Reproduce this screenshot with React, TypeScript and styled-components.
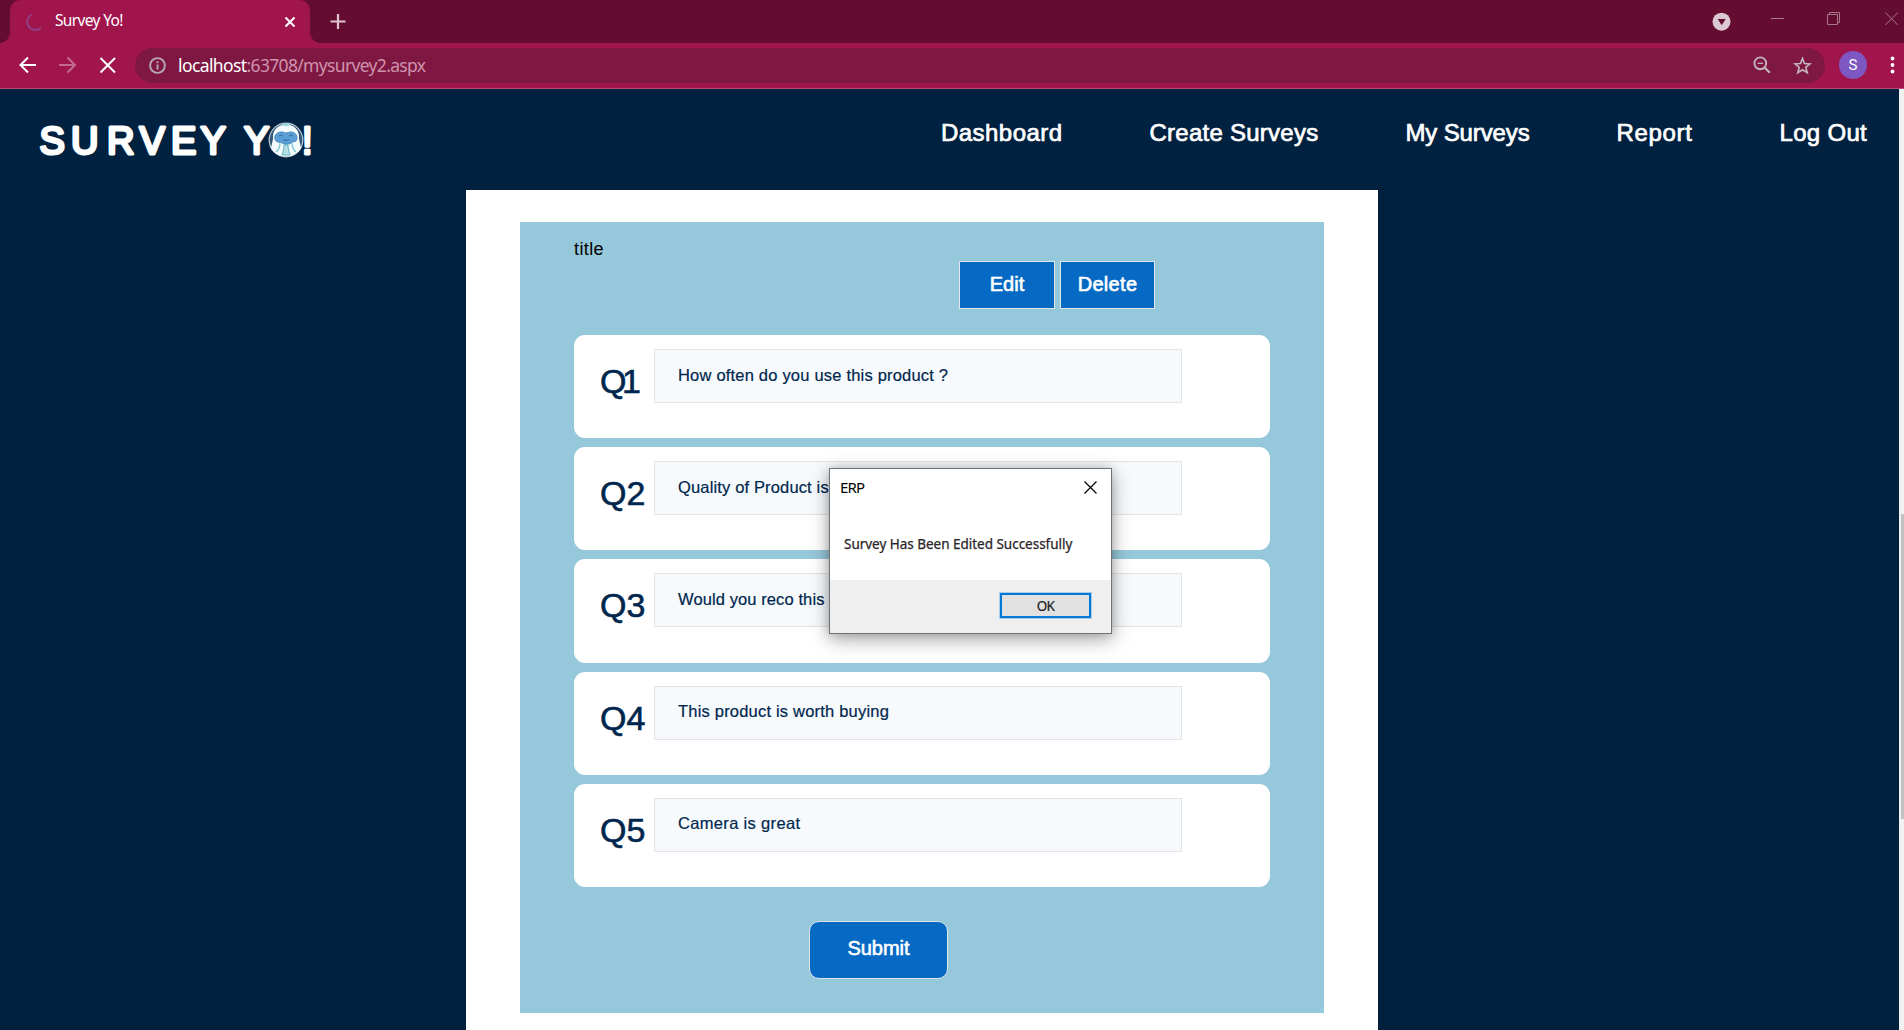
import React from "react";
import styled, { createGlobalStyle } from "styled-components";

const GlobalStyle = createGlobalStyle`
  * { box-sizing: border-box; }
  html, body { margin: 0; padding: 0; overflow: hidden; }
`;

const pageFont = `"Liberation Sans", Arial, sans-serif`;
const systemFont = `"Noto Sans", "Open Sans", sans-serif`;

const Window = styled.div`
  display: flex;
  flex-direction: column;
  width: 1904px;
  height: 1030px;
  overflow: hidden;
  position: relative;
  background: #00203e;
  font-family: ${pageFont};
`;

/* Browser chrome */
const TabStrip = styled.div`
  display: flex;
  height: 43px;
  flex: none;
  background: #640d31;
  padding-left: 10px;
`;

const Tab = styled.div`
  display: flex;
  align-items: center;
  position: relative;
  width: 300px;
  height: 43px;
  padding: 0 14px 0 14px;
  border-radius: 10px 10px 0 0;
  background: #a1154d;
  &::before,
  &::after {
    content: "";
    position: absolute;
    bottom: 0;
    width: 10px;
    height: 10px;
  }
  &::before {
    left: -10px;
    background: radial-gradient(circle at 0 0, transparent 9.5px, #a1154d 10px);
  }
  &::after {
    right: -10px;
    background: radial-gradient(circle at 100% 0, transparent 9.5px, #a1154d 10px);
  }
`;

const TabTitle = styled.span`
  flex: 1;
  margin-left: 12px;
  padding-bottom: 3px;
  font: 15.5px ${systemFont};
  letter-spacing: -0.65px;
  color: #fff;
`;

const NewTab = styled.div`
  display: flex;
  align-items: center;
  margin-left: 20px;
  padding-bottom: 2px;
`;

const WindowControls = styled.div`
  display: flex;
  margin-left: auto;
  padding-top: 11px;
  svg { flex: none; display: block; }
`;

const Toolbar = styled.div`
  display: flex;
  align-items: center;
  height: 46px;
  flex: none;
  background: #a1154d;
  border-bottom: 1px solid #bb4a76;
  padding: 0 8px 1px 18px;
`;

const NavIcons = styled.div`
  display: flex;
  gap: 20px;
  width: 117px;
  svg { display: block; }
`;

const AddressBar = styled.div`
  display: flex;
  align-items: center;
  width: 1690px;
  height: 35px;
  padding: 0 13px 0 14px;
  border-radius: 18px;
  background: #7e1842;
`;

const Url = styled.span`
  flex: 1;
  margin-left: 12px;
  font: 17.5px ${systemFont};
  letter-spacing: -0.67px;
  color: #d093ad;
  white-space: pre;
`;

const UrlHost = styled.span`
  color: #fff;
  letter-spacing: -0.6px;
`;

const AddressIcons = styled.div`
  display: flex;
  align-items: center;
  gap: 22px;
`;

const Avatar = styled.div`
  display: flex;
  align-items: center;
  justify-content: center;
  width: 28px;
  height: 28px;
  margin-left: 14px;
  border-radius: 50%;
  background: #7e57c2;
  color: #fff;
  font: 15px Roboto, sans-serif;
`;

const Menu = styled.div`
  display: flex;
  margin-left: 23px;
`;

/* Web page */
const Viewport = styled.div`
  display: flex;
  flex: 1;
  min-height: 0;
`;

const Page = styled.div`
  flex: 1;
  display: flex;
  flex-direction: column;
  align-items: center;
`;

const Header = styled.header`
  display: flex;
  justify-content: space-between;
  width: 100%;
  height: 101px;
  flex: none;
  padding: 0 32px 0 30px;
  background: #00213f;
  border-bottom: 1px solid #001d3a;
`;

const Nav = styled.nav`
  display: flex;
  gap: 87px;
  padding-top: 30px;
`;

const NavLink = styled.a<{ $track: number }>`
  height: 28px;
  font-size: 24px;
  line-height: 28px;
  letter-spacing: ${(p) => p.$track}px;
  color: #fff;
  -webkit-text-stroke: 0.7px #fff;
  white-space: nowrap;
`;

const Sheet = styled.main`
  width: 912px;
  flex: 1;
  margin-right: 55px;
  padding: 32px 54px 17px;
  background: #fff;
`;

const Survey = styled.section`
  display: flex;
  flex-direction: column;
  height: 791px;
  padding: 18px 54px 0;
  background: #96c8db;
`;

const SurveyTitle = styled.div`
  height: 21px;
  font-size: 18px;
  line-height: 19px;
  letter-spacing: 0.4px;
  color: #000;
`;

const Actions = styled.div`
  display: flex;
  gap: 5px;
  margin-left: 385px;
`;

const Button = styled.button<{ $w: number; $h: number; $radius?: number; $track?: number }>`
  width: ${(p) => p.$w}px;
  height: ${(p) => p.$h}px;
  padding: 0 0 2px;
  border: 1px solid #e2e5e9;
  border-radius: ${(p) => p.$radius ?? 0}px;
  background: #066ac4;
  color: #fff;
  font: 20px ${pageFont};
  letter-spacing: ${(p) => p.$track ?? 0}px;
  -webkit-text-stroke: 0.6px #fff;
`;

const Questions = styled.div`
  display: flex;
  flex-direction: column;
  gap: 9px;
  margin-top: 26px;
`;

const Card = styled.div`
  display: flex;
  height: 103.2px;
  padding: 14px 0 0 26px;
  border-radius: 11px;
  background: #fff;
`;

const Number = styled.div<{ $track: number }>`
  width: 54px;
  padding-top: 13px;
  font-size: 34px;
  line-height: 39px;
  letter-spacing: ${(p) => p.$track}px;
  color: #00264d;
  -webkit-text-stroke: 0.6px #00264d;
`;

const Field = styled.div`
  display: flex;
  align-items: center;
  width: 528px;
  height: 54px;
  padding: 0 23px 2px;
  border: 1px solid #e2e4e7;
  background: #f6fafd;
  color: #00264d;
`;

const FieldText = styled.span<{ $track: number }>`
  font-size: 16.5px;
  letter-spacing: ${(p) => p.$track}px;
  -webkit-text-stroke: 0.2px #00264d;
  white-space: nowrap;
`;

const SubmitRow = styled.div`
  margin: 34px 0 0 235px;
`;

const Scrollbar = styled.div`
  width: 5px;
  padding: 425px 0 0 2px;
  background: #f1f1f1;
`;

const Thumb = styled.div`
  height: 305px;
  background: #c1c1c1;
`;

/* Message box floating over the page */
const Dialog = styled.div`
  position: absolute;
  left: 829px;
  top: 468px;
  display: flex;
  flex-direction: column;
  width: 283px;
  height: 166px;
  border: 1px solid #707274;
  background: #fff;
  box-shadow: 0 5px 18px rgba(0, 0, 0, 0.36), 0 0 8px rgba(0, 0, 0, 0.14);
  font-family: ${systemFont};
`;

const DialogBar = styled.div`
  display: flex;
  justify-content: space-between;
  align-items: center;
  height: 37px;
  padding: 0 14px 0 10px;
`;

const DialogTitle = styled.span`
  padding-bottom: 2px;
  font-size: 15px;
  letter-spacing: -0.8px;
  color: #000;
`;

const DialogMessage = styled.div`
  flex: 1;
  padding: 28px 0 0 14px;
  font-size: 13.5px;
  line-height: 20px;
  letter-spacing: -0.02px;
  color: #2a2428;
  -webkit-text-stroke: 0.25px #2a2428;
  white-space: nowrap;
`;

const DialogFooter = styled.div`
  display: flex;
  justify-content: flex-end;
  height: 53px;
  padding: 13px 20px 0 0;
  background: #efefef;
`;

const OkButton = styled.button`
  width: 91px;
  height: 25px;
  padding: 0;
  border: 2px solid #0078d7;
  box-shadow: 0 0 0 1px #a9cdea;
  background: #e1e1e1;
  font: 13.5px ${systemFont};
  letter-spacing: -0.6px;
  color: #222;
  -webkit-text-stroke: 0.2px #222;
`;

const Logo = () => (
  <svg width="300" height="99" viewBox="30 89 300 99" aria-label="Survey Yo!">
    <g
      fontFamily="Liberation Sans, Arial, sans-serif"
      fontSize="38"
      fill="#fff"
      stroke="#fff"
      strokeWidth="3"
      strokeLinejoin="round"
    >
      <text x="39.500 71 107 139.500 171 200.500 244 302" y="153.800">
        SURVEYY!
      </text>
    </g>
    <circle cx="286" cy="140" r="16.800" fill="#35587a" stroke="#b9c7d2" strokeWidth="1.300" />
    <path d="M273 139c-1-9 5-14 13-15 8 1 14 6 13 15l2 9c-3 6-9 8.500-15 8.500s-12-2.500-15-8.500z" fill="#f4fcfd" />
    <path d="M281 125l5-2 5 2-5 1.500z" fill="#9bdbe3" />
    <path
      d="M275 139c-1-5 3-7 7-7 2 0 3 1 4 1s3-1 5-1c4 0 6 3 6 6s-2 4-5 4c-2 3-9 3-11 0-3 1-6-1-6-3z"
      fill="#5b9fd6"
      stroke="#3f82b8"
      strokeWidth="0.900"
    />
    <path d="M279 136q2-2 4 0M289 136q2-2 4 0M283 139.500q3 2 6 0" fill="none" stroke="#27679d" strokeWidth="0.900" />
    <path
      d="M280 143c0 4-1.500 7-4 9M292 143c0 4 1.500 7 4 9"
      fill="none"
      stroke="#7fcad3"
      strokeWidth="1.400"
    />
    <path d="M284 145c0 4-1 6-2 10h8c-1-4-2-6-2-10z" fill="#b5dfe5" stroke="#58aebb" strokeWidth="0.900" />
  </svg>
);

const links = [
  { label: "Dashboard", track: 0.45 },
  { label: "Create Surveys", track: 0.25 },
  { label: "My Surveys", track: -0.12 },
  { label: "Report", track: 0.65 },
  { label: "Log Out", track: 0.3 },
];

const questions = [
  { text: "How often do you use this product ?", track: 0.2 },
  { text: "Quality of Product is", track: 0.15 },
  { text: "Would you reco this", track: 0.1 },
  { text: "This product is worth buying", track: 0.2 },
  { text: "Camera is great", track: 0.33 },
];

export default function App() {
  return (
    <Window>
      <GlobalStyle />
      <TabStrip>
        <Tab>
          <svg width="19" height="20" viewBox="0 0 19 20" fill="none" stroke="#8f3f83" strokeWidth="2">
            <path d="M7.500 2.500A8.300 8.300 0 1 0 17 16" />
          </svg>
          <TabTitle>Survey Yo!</TabTitle>
          <svg width="12" height="12" viewBox="0 0 12 12" stroke="#fff" strokeWidth="2">
            <path d="M1.500 1.500l9 9M10.500 1.500l-9 9" />
          </svg>
        </Tab>
        <NewTab>
          <svg width="16" height="16" viewBox="0 0 16 16" stroke="#dcc5cf" strokeWidth="2.200">
            <path d="M8 1v15M0.500 8.500h15" />
          </svg>
        </NewTab>
        <WindowControls>
          <svg width="192" height="21" viewBox="1712 11 192 21" fill="none" stroke="#a7788c">
            <circle cx="1721.500" cy="21.700" r="9" fill="#dcc8d1" stroke="none" />
            <path d="M1717.700 19h8l-4 6.200z" fill="#640d31" stroke="none" />
            <path d="M1771 18.500h13M1827.500 14.500h10v10h-10zM1829.500 14.500v-2h10v10h-2M1885.300 12.500l12.500 12.500M1897.800 12.500l-12.500 12.500" />
          </svg>
        </WindowControls>
      </TabStrip>
      <Toolbar>
        <NavIcons>
          <svg width="20" height="20" viewBox="0 0 20 20" fill="none" stroke="#fff" strokeWidth="2">
            <path d="M18 10H3M10 2.500L2.500 10l7.500 7.500" />
          </svg>
          <svg width="20" height="20" viewBox="0 0 20 20" fill="none" stroke="#c46a90" strokeWidth="2">
            <path d="M1 10h15.500M9.500 2.500L17 10l-7.500 7.500" />
          </svg>
          <svg width="20" height="20" viewBox="0 0 20 20" fill="none" stroke="#fff" strokeWidth="2">
            <path d="M2.500 3l14.500 14.500M17 3L2.500 17.500" />
          </svg>
        </NavIcons>
        <AddressBar>
          <svg width="17" height="17" viewBox="0 0 17 17" fill="none" stroke="#b7a9b1" strokeWidth="1.900">
            <circle cx="8.500" cy="8.500" r="7.400" />
            <path d="M8.500 7.500v5M8.500 4.300v2" />
          </svg>
          <Url>
            <UrlHost>localhost</UrlHost>:63708/mysurvey2.aspx
          </Url>
          <AddressIcons>
            <svg width="18" height="18" viewBox="0 0 18 18" fill="none" stroke="#c4b3bb" strokeWidth="1.900">
              <circle cx="7.300" cy="7.300" r="5.900" />
              <path d="M4.500 7.300h5.600" strokeWidth="1.300" />
              <path d="M11.500 11.500l5.300 5.300" strokeWidth="2.300" />
            </svg>
            <svg width="19" height="19" viewBox="0 0 19 19" fill="none" stroke="#c4b3bb" strokeWidth="1.700">
              <path d="M9.500 2.500l2 5 5.500.400-4.200 3.500 1.400 5.300-4.700-2.900-4.700 2.900 1.400-5.300L2 7.900l5.500-.400z" />
            </svg>
          </AddressIcons>
        </AddressBar>
        <Avatar>S</Avatar>
        <Menu>
          <svg width="5" height="18" viewBox="0 0 5 18" fill="#fff">
            <circle cx="2.500" cy="2.500" r="1.900" />
            <circle cx="2.500" cy="9" r="1.900" />
            <circle cx="2.500" cy="15.500" r="1.900" />
          </svg>
        </Menu>
      </Toolbar>
      <Viewport>
        <Page>
          <Header>
            <Logo />
            <Nav>
              {links.map((l) => (
                <NavLink key={l.label} $track={l.track}>
                  {l.label}
                </NavLink>
              ))}
            </Nav>
          </Header>
          <Sheet>
            <Survey>
              <SurveyTitle>title</SurveyTitle>
              <Actions>
                <Button $w={96} $h={48}>Edit</Button>
                <Button $w={95} $h={48} $track={0.3}>Delete</Button>
              </Actions>
              <Questions>
                {questions.map((q, i) => (
                  <Card key={q.text}>
                    <Number $track={i === 0 ? -4.5 : 0}>Q{i + 1}</Number>
                    <Field>
                      <FieldText $track={q.track}>{q.text}</FieldText>
                    </Field>
                  </Card>
                ))}
              </Questions>
              <SubmitRow>
                <Button $w={139} $h={58} $radius={10}>Submit</Button>
              </SubmitRow>
            </Survey>
          </Sheet>
        </Page>
        <Scrollbar>
          <Thumb />
        </Scrollbar>
      </Viewport>
      <Dialog>
        <DialogBar>
          <DialogTitle>ERP</DialogTitle>
          <svg width="13" height="13" viewBox="0 0 13 13" stroke="#000" strokeWidth="1.200">
            <path d="M.5.5l12 12M12.500.5l-12 12" />
          </svg>
        </DialogBar>
        <DialogMessage>Survey Has Been Edited Successfully</DialogMessage>
        <DialogFooter>
          <OkButton>OK</OkButton>
        </DialogFooter>
      </Dialog>
    </Window>
  );
}
